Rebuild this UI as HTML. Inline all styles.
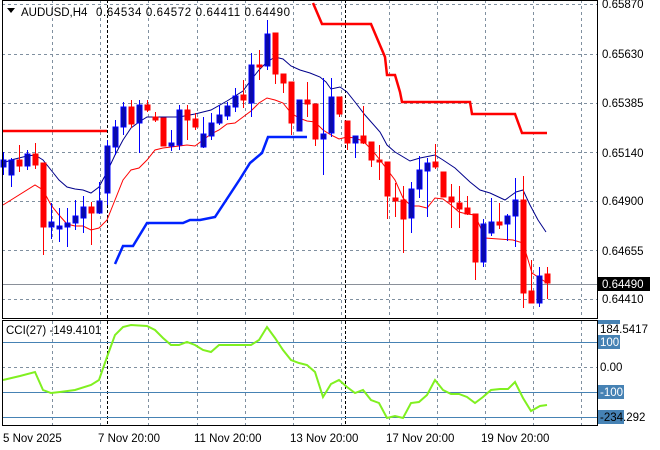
<!DOCTYPE html>
<html><head><meta charset="utf-8"><style>
html,body{margin:0;padding:0;background:#fff;width:660px;height:450px;overflow:hidden}
svg{display:block;font-family:"Liberation Sans",sans-serif}
</style></head><body>
<svg width="660" height="450" viewBox="0 0 660 450" xmlns="http://www.w3.org/2000/svg">
<rect width="660" height="450" fill="#fff"/>
<g stroke="#8090a0" stroke-width="1" stroke-dasharray="3,3" fill="none">
<path d="M2,4.5H597M2,54.5H597M2,103.5H597M2,152.5H597M2,201.5H597M2,250.5H597M2,299.5H597"/>
<path d="M52.5,0V318M100.5,0V318M148.5,0V318M197.5,0V318M245.5,0V318M293.5,0V318M341.5,0V318M389.5,0V318M437.5,0V318M485.5,0V318M533.5,0V318M581.5,0V318"/>
<path d="M52.5,321V425M100.5,321V425M148.5,321V425M197.5,321V425M245.5,321V425M293.5,321V425M341.5,321V425M389.5,321V425M437.5,321V425M485.5,321V425M533.5,321V425M581.5,321V425"/>
<path d="M2,367.5H597"/>
</g>
<g stroke="#000" stroke-dasharray="3,2"><path d="M107.5,0V318M107.5,321V425M345.5,0V318M345.5,321V425"/></g>
<path d="M2,284.5H597" stroke="#8a9099"/>
<path d="M3,131H107" stroke="#ff0000" stroke-width="2.5" fill="none"/>
<path d="M313,3L322,24H371L385,57L387,75H395L400,92L402,102H470L472,114H515L522,133H547" stroke="#ff0000" stroke-width="2.5" fill="none"/>
<path d="M115,264L123,246H133L147,223H183L190,220H200L215,217L240,179L250,163L262,153L268,137H307" stroke="#0022ff" stroke-width="2.5" fill="none"/>
<path d="M3,163L11,160 27,156 35,155 43,160 51,170 59,180 67,187 75,189 83,190 91,193 99,187 107,172 115,155 123,140 131,128 139,122 147,117 163,117 179,117 195,114 211,110 227,101 243,91 251,80 259,70 267,62 275,57 283,59 291,66 300,70 310,73 320,77 326,82 331,89 340,87 347,92 355,102 365,115 380,132 387,145 395,152 410,161 420,158 435,155 443,160 455,168 470,182 480,190 490,193 505,200 516,192 523,190 530,205 538,220 546,232" stroke="#00008b" fill="none"/>
<path d="M3,205L35,185 43,190 51,205 59,215 67,224 75,226 83,226 91,230 99,228 107,220 115,200 123,180 131,170 139,168 147,160 155,150 163,148 171,147 179,146 187,145 195,146 203,140 211,134 219,130 227,124 235,123 243,117 251,111 259,103 267,98 275,100 283,103 291,113 299,118 307,121 315,122 323,130 331,135 339,139 347,137 355,138 363,141 372,150 380,160 395,180 403,198 411,206 419,206 427,208 435,198 443,199 451,205 459,212 467,214 475,215 485,238 513,240 523,243 532,273 547,283" stroke="#ff0000" fill="none"/>
<g stroke-width="1">
<g stroke="#0000ff" fill="#0a0aa8">
<line x1="3.5" y1="152" x2="3.5" y2="175"/><rect x="1" y="160" width="5" height="7"/>
<line x1="11.5" y1="158" x2="11.5" y2="187"/><rect x="9" y="160" width="5" height="15"/>
<line x1="27.5" y1="150" x2="27.5" y2="170"/><rect x="25" y="154" width="5" height="12"/>
<line x1="51.5" y1="203" x2="51.5" y2="239"/><rect x="49" y="222" width="5" height="5"/>
<line x1="59.5" y1="208" x2="59.5" y2="242"/><rect x="57" y="226" width="5" height="3"/>
<line x1="67.5" y1="208" x2="67.5" y2="247"/><rect x="65" y="223" width="5" height="4"/>
<line x1="75.5" y1="200" x2="75.5" y2="230"/><rect x="73" y="216" width="5" height="7"/>
<line x1="83.5" y1="196" x2="83.5" y2="233"/><rect x="81" y="207" width="5" height="11"/>
<line x1="99.5" y1="182" x2="99.5" y2="214"/><rect x="97" y="201" width="5" height="12"/>
<line x1="107.5" y1="140" x2="107.5" y2="205"/><rect x="105" y="146" width="5" height="47"/>
<line x1="115.5" y1="120" x2="115.5" y2="155"/><rect x="113" y="127" width="5" height="20"/>
<line x1="123.5" y1="102" x2="123.5" y2="135"/><rect x="121" y="107" width="5" height="20"/>
<line x1="139.5" y1="100" x2="139.5" y2="153"/><rect x="137" y="105" width="5" height="18"/>
<line x1="171.5" y1="130" x2="171.5" y2="151"/><rect x="169" y="143" width="5" height="3"/>
<line x1="179.5" y1="105" x2="179.5" y2="150"/><rect x="177" y="110" width="5" height="35"/>
<line x1="203.5" y1="117" x2="203.5" y2="148"/><rect x="201" y="134" width="5" height="13"/>
<line x1="211.5" y1="113" x2="211.5" y2="140"/><rect x="209" y="123" width="5" height="13"/>
<line x1="219.5" y1="105" x2="219.5" y2="125"/><rect x="217" y="115" width="5" height="8"/>
<line x1="227.5" y1="102" x2="227.5" y2="120"/><rect x="225" y="106" width="5" height="10"/>
<line x1="235.5" y1="88" x2="235.5" y2="112"/><rect x="233" y="96" width="5" height="11"/>
<line x1="251.5" y1="53" x2="251.5" y2="117"/><rect x="249" y="65" width="5" height="38"/>
<line x1="267.5" y1="20" x2="267.5" y2="70"/><rect x="265" y="34" width="5" height="32"/>
<line x1="299.5" y1="100" x2="299.5" y2="131"/><rect x="297" y="100" width="5" height="31"/>
<line x1="323.5" y1="78" x2="323.5" y2="175"/><rect x="321" y="134" width="5" height="5"/>
<line x1="331.5" y1="78" x2="331.5" y2="137"/><rect x="329" y="97" width="5" height="36"/>
<line x1="355.5" y1="136" x2="355.5" y2="158"/><rect x="353" y="136" width="5" height="7"/>
<line x1="411.5" y1="182" x2="411.5" y2="233"/><rect x="409" y="189" width="5" height="29"/>
<line x1="419.5" y1="156" x2="419.5" y2="198"/><rect x="417" y="170" width="5" height="19"/>
<line x1="427.5" y1="158" x2="427.5" y2="217"/><rect x="425" y="163" width="5" height="8"/>
<line x1="483.5" y1="219" x2="483.5" y2="267"/><rect x="481" y="224" width="5" height="38"/>
<line x1="491.5" y1="198" x2="491.5" y2="236"/><rect x="489" y="222" width="5" height="11"/>
<line x1="507.5" y1="214" x2="507.5" y2="241"/><rect x="505" y="216" width="5" height="8"/>
<line x1="515.5" y1="178" x2="515.5" y2="247"/><rect x="513" y="200" width="5" height="16"/>
<line x1="539.5" y1="267" x2="539.5" y2="307"/><rect x="537" y="276" width="5" height="27"/>
</g>
<g stroke="#ff0000" fill="#ff0000">
<line x1="19.5" y1="145" x2="19.5" y2="172"/><rect x="17" y="160" width="5" height="6"/>
<line x1="35.5" y1="143" x2="35.5" y2="169"/><rect x="33" y="154" width="5" height="11"/>
<line x1="43.5" y1="163" x2="43.5" y2="255"/><rect x="41" y="163" width="5" height="64"/>
<line x1="91.5" y1="202" x2="91.5" y2="245"/><rect x="89" y="207" width="5" height="6"/>
<line x1="131.5" y1="100" x2="131.5" y2="128"/><rect x="129" y="107" width="5" height="17"/>
<line x1="147.5" y1="100" x2="147.5" y2="112"/><rect x="145" y="105" width="5" height="5"/>
<line x1="155.5" y1="112" x2="155.5" y2="122"/><rect x="153" y="117" width="5" height="3"/>
<line x1="163.5" y1="118" x2="163.5" y2="146"/><rect x="161" y="118" width="5" height="28"/>
<line x1="187.5" y1="105" x2="187.5" y2="140"/><rect x="185" y="110" width="5" height="10"/>
<line x1="195.5" y1="113" x2="195.5" y2="130"/><rect x="193" y="119" width="5" height="8"/>
<line x1="243.5" y1="80" x2="243.5" y2="108"/><rect x="241" y="95" width="5" height="5"/>
<line x1="259.5" y1="50" x2="259.5" y2="80"/><rect x="257" y="65" width="5" height="2"/>
<line x1="275.5" y1="33" x2="275.5" y2="84"/><rect x="273" y="33" width="5" height="41"/>
<line x1="283.5" y1="74" x2="283.5" y2="93"/><rect x="281" y="74" width="5" height="9"/>
<line x1="291.5" y1="82" x2="291.5" y2="135"/><rect x="289" y="82" width="5" height="41"/>
<line x1="307.5" y1="82" x2="307.5" y2="117"/><rect x="305" y="100" width="5" height="4"/>
<line x1="315.5" y1="104" x2="315.5" y2="146"/><rect x="313" y="104" width="5" height="35"/>
<line x1="339.5" y1="97" x2="339.5" y2="117"/><rect x="337" y="97" width="5" height="17"/>
<line x1="347.5" y1="121" x2="347.5" y2="150"/><rect x="345" y="121" width="5" height="22"/>
<line x1="363.5" y1="106" x2="363.5" y2="144"/><rect x="361" y="136" width="5" height="7"/>
<line x1="371.5" y1="142" x2="371.5" y2="167"/><rect x="369" y="142" width="5" height="18"/>
<line x1="379.5" y1="145" x2="379.5" y2="180"/><rect x="377" y="160" width="5" height="2"/>
<line x1="387.5" y1="162" x2="387.5" y2="219"/><rect x="385" y="162" width="5" height="34"/>
<line x1="395.5" y1="183" x2="395.5" y2="217"/><rect x="393" y="198" width="5" height="3"/>
<line x1="403.5" y1="186" x2="403.5" y2="253"/><rect x="401" y="200" width="5" height="19"/>
<line x1="435.5" y1="144" x2="435.5" y2="169"/><rect x="433" y="162" width="5" height="5"/>
<line x1="443.5" y1="172" x2="443.5" y2="197"/><rect x="441" y="172" width="5" height="25"/>
<line x1="451.5" y1="184" x2="451.5" y2="228"/><rect x="449" y="197" width="5" height="5"/>
<line x1="459.5" y1="186" x2="459.5" y2="228"/><rect x="457" y="203" width="5" height="6"/>
<line x1="467.5" y1="196" x2="467.5" y2="215"/><rect x="465" y="208" width="5" height="6"/>
<line x1="475.5" y1="214" x2="475.5" y2="280"/><rect x="473" y="214" width="5" height="48"/>
<line x1="499.5" y1="203" x2="499.5" y2="229"/><rect x="497" y="222" width="5" height="3"/>
<line x1="523.5" y1="176" x2="523.5" y2="308"/><rect x="521" y="200" width="5" height="93"/>
<line x1="531.5" y1="260" x2="531.5" y2="303"/><rect x="529" y="291" width="5" height="12"/>
<line x1="547.5" y1="267" x2="547.5" y2="299"/><rect x="545" y="274" width="5" height="9"/>
</g>
</g>
<path d="M2,342.5H597M2,392.5H597M2,417.5H597" stroke="#4682b4"/>
<path d="M3,380L20,376 35,372 43,390 51,393 60,392 75,390 91,385 99,380 107,357 115,335 123,327 131,325 147,326 155,330 163,338 171,345 179,345 187,342 195,345 203,350 211,352 219,345 251,345 259,340 267,327 275,338 283,350 291,360 299,363 307,365 315,372 323,397 331,384 339,380 347,387 355,393 363,390 371,400 379,403 387,418 395,416 403,418 411,403 419,402 427,395 435,380 443,390 451,394 459,394 467,397 475,403 483,397 491,390 500,389 508,389 515,382 523,398 531,411 540,406 547,405" stroke="#80f020" stroke-width="2" fill="none"/>
<rect x="2.5" y="0.5" width="595" height="318" fill="none" stroke="#000"/>
<rect x="2.5" y="320.5" width="595" height="105" fill="none" stroke="#000"/>
<path d="M7,8H15L11,13Z" fill="#000"/>
<text x="21" y="16" font-size="11.5" fill="#000">AUDUSD,H4</text>
<text x="96" y="16" font-size="11.5" fill="#000" textLength="194" lengthAdjust="spacing">0.64534 0.64572 0.64411 0.64490</text>
<text x="6" y="334" font-size="11.5" fill="#000">CCI(27) -149.4101</text>
<g font-size="11.5" fill="#000">
<text x="602" y="8">0.65870</text>
<text x="602" y="58">0.65630</text>
<text x="602" y="107">0.65385</text>
<text x="602" y="157">0.65140</text>
<text x="602" y="205">0.64900</text>
<text x="602" y="255">0.64655</text>
<text x="602" y="303">0.64410</text>
</g>
<rect x="598" y="277" width="52" height="14" fill="#000"/>
<text x="602" y="288" font-size="11.5" fill="#fff">0.64490</text>
<g font-size="11.5">
<rect x="598" y="320" width="22" height="4" fill="#4682b4"/>
<text x="600" y="333" fill="#000">184.5417</text>
<rect x="598" y="335" width="22" height="14" fill="#4682b4"/>
<text x="600" y="346" fill="#fff">100</text>
<text x="600" y="371" fill="#000">0.00</text>
<rect x="598" y="385" width="26" height="14" fill="#4682b4"/>
<text x="600" y="396" fill="#fff">-100</text>
<rect x="598" y="410" width="26" height="14" fill="#4682b4"/>
<text x="600" y="421" fill="#000">-234.292</text>
</g>
<g font-size="11.5" fill="#000">
<text x="3" y="442">5 Nov 2025</text>
<text x="98" y="442">7 Nov 20:00</text>
<text x="194" y="442">11 Nov 20:00</text>
<text x="290" y="442">13 Nov 20:00</text>
<text x="386" y="442">17 Nov 20:00</text>
<text x="481" y="442">19 Nov 20:00</text>
</g>
</svg>
</body></html>
